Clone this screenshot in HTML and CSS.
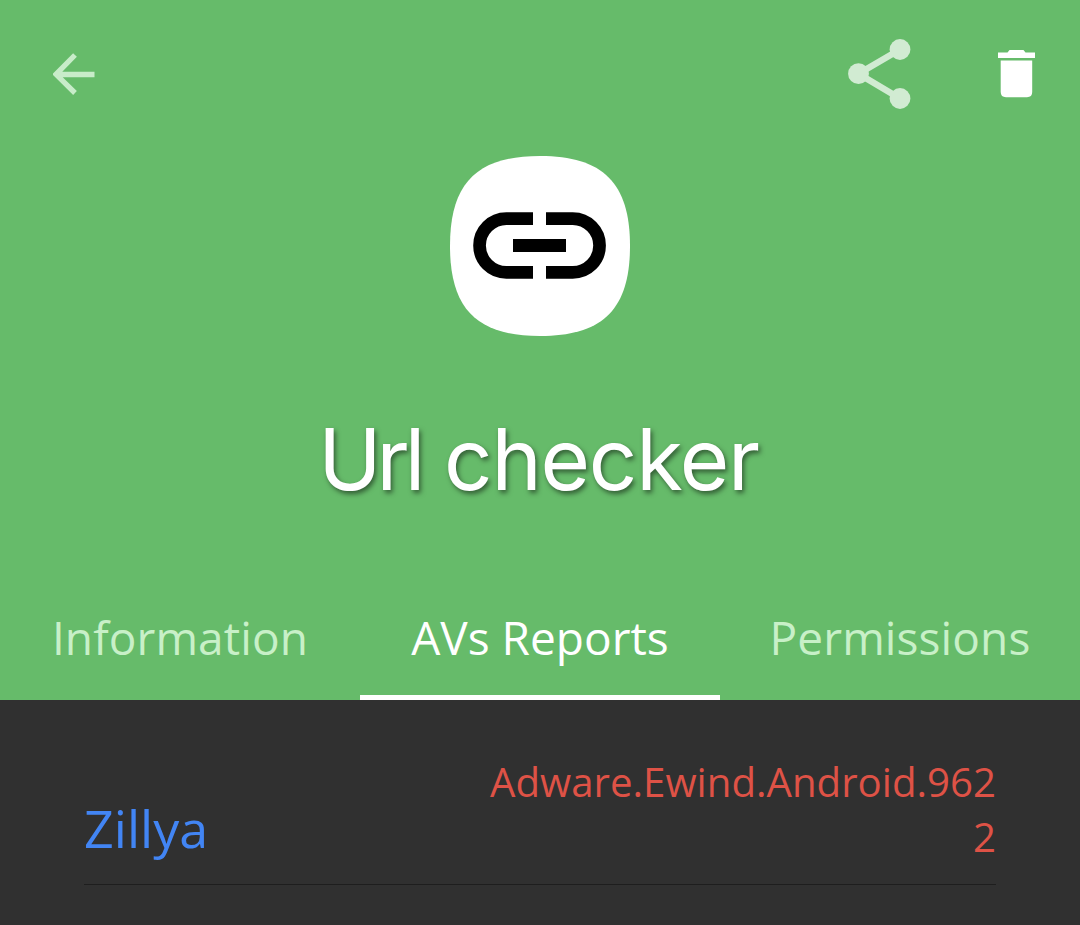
FILE: index.html
```
<!DOCTYPE html>
<html lang="en">
<head>
    <meta charset="UTF-8">
    <title>Url checker</title>
    <link rel="stylesheet" href="styles.css">
</head>
<body>
    <header class="app-header">
        <div class="toolbar">
            <svg class="icon-back" viewBox="0 0 42 42">
                <path d="M41.500 21.500H4M22 2L3 21.300l19 18.700" fill="none" stroke="currentColor" stroke-width="5.300"/>
            </svg>
            <svg class="icon-share" viewBox="0 0 63 70">
                <path d="M52 10.500L10.500 34.700L52 59.500" fill="none" stroke="currentColor" stroke-width="6.500"/>
                <circle cx="52" cy="10.500" r="10.400"/>
                <circle cx="10.500" cy="34.700" r="10.400"/>
                <circle cx="52" cy="59.500" r="10.400"/>
            </svg>
            <svg class="icon-delete" viewBox="0 0 38 48">
                <path d="M0 2.500H9.500L11.500 0H25.500L27.500 2.500H37V8H0z"/>
                <path d="M2.700 10.500H34.200V42Q34.200 47.200 29 47.200H8Q2.700 47.200 2.700 42z"/>
            </svg>
        </div>
        <svg class="app-icon" viewBox="0 0 180 180">
            <path d="M90 0C153 0 180 27 180 90S153 180 90 180 0 153 0 90 27 0 90 0z" fill="#fff"/>
            <path d="M83 62.700H56.400a26.850 26.850 0 0 0 0 53.700H83M96 62.700h26.700a26.850 26.850 0 0 1 0 53.700H96" fill="none" stroke="#000" stroke-width="12.700"/>
            <path d="M63 83h53v13H63z"/>
        </svg>
        <h1 class="app-name"><span class="tight">Url</span> checker</h1>
        <nav class="tabs">
            <div class="tab">Information</div>
            <div class="tab active">AVs Reports</div>
            <div class="tab">Permissions</div>
        </nav>
    </header>
    <main class="reports">
        <div class="report">
            <span class="engine">Zillya</span>
            <span class="threat">Adware.Ewind.Android.9622</span>
        </div>
    </main>
</body>
</html>
```
FILE: styles.css
```
body {
    margin: 0;
    min-height: 100vh;
    background-color: #303030;
    font-family: "Open Sans", "Noto Sans", sans-serif;
}
.app-header {
    display: flex;
    flex-direction: column;
    align-items: center;
    height: 700px;
    background-color: #66bb6a;
    color: #fff;
}
.toolbar {
    display: flex;
    align-items: center;
    box-sizing: border-box;
    width: 100%;
    height: 148px;
    padding: 0 44px 0 53px;
}
.toolbar svg {
    fill: currentColor;
}
.icon-back {
    width: 42px;
    height: 42px;
    color: #c8ecc9;
}
.icon-share {
    width: 63px;
    height: 70px;
    margin-left: auto;
    color: #d1ebd2;
}
.icon-delete {
    width: 38px;
    height: 48px;
    margin-left: 87px;
}
.app-icon {
    width: 180px;
    height: 180px;
    margin-top: 8px;
}
.app-name {
    margin: 72px 0 0;
    padding-right: 3px;
    font-family: Inter, sans-serif;
    font-size: 85px;
    font-weight: 400;
    line-height: 104px;
    letter-spacing: -1.2px;
    word-spacing: 1px;
    white-space: nowrap;
    text-shadow: 2px 3px 5px rgba(0, 0, 0, 0.5);
}
.tight {
    letter-spacing: -5px;
}
.tabs {
    display: flex;
    width: 100%;
    height: 124px;
    margin-top: auto;
}
.tab {
    box-sizing: border-box;
    flex: 1;
    padding-top: 29px;
    font-size: 46px;
    line-height: 64px;
    letter-spacing: 0.1px;
    text-align: center;
    color: #c8f0c8;
}
.tab.active {
    color: #fff;
    letter-spacing: 0;
    border-bottom: 5px solid #fff;
}
.reports {
    padding: 55px 84px 0;
}
.report {
    display: flex;
    justify-content: space-between;
    align-items: flex-end;
    height: 129px;
    border-bottom: 1px solid #1e1e1e;
}
.engine {
    padding-bottom: 21px;
    font-size: 52px;
    line-height: 71px;
    color: #4285f4;
}
.threat {
    width: 510px;
    padding-bottom: 20px;
    font-size: 40.2px;
    line-height: 55px;
    text-align: right;
    word-break: break-all;
    color: #de5246;
}
```
